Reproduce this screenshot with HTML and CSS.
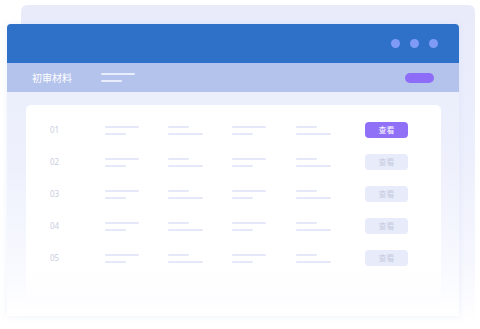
FILE: index.html
```html
<!DOCTYPE html>
<html lang="zh">
<head>
<meta charset="utf-8">
<link rel="stylesheet" href="styles.css">
</head>
<body>
<div class="stage">
  <div class="back-card"></div>
  <div class="window">
    <div class="titlebar">
      <span class="dot"></span><span class="dot"></span><span class="dot"></span>
    </div>
    <div class="navbar">
      <span class="nav-title">初审材料</span>
      <div class="nav-lines"><span class="nl long"></span><span class="nl short"></span></div>
      <span class="nav-pill"></span>
    </div>
    <div class="content">
      <div class="card">
        <div class="row">
          <span class="num">01</span>
          <div class="cell a"><i></i><i></i></div>
          <div class="cell b"><i></i><i></i></div>
          <div class="cell a"><i></i><i></i></div>
          <div class="cell b"><i></i><i></i></div>
          <span class="btn active">查看</span>
        </div>
        <div class="row">
          <span class="num">02</span>
          <div class="cell a"><i></i><i></i></div>
          <div class="cell b"><i></i><i></i></div>
          <div class="cell a"><i></i><i></i></div>
          <div class="cell b"><i></i><i></i></div>
          <span class="btn">查看</span>
        </div>
        <div class="row">
          <span class="num">03</span>
          <div class="cell a"><i></i><i></i></div>
          <div class="cell b"><i></i><i></i></div>
          <div class="cell a"><i></i><i></i></div>
          <div class="cell b"><i></i><i></i></div>
          <span class="btn">查看</span>
        </div>
        <div class="row">
          <span class="num">04</span>
          <div class="cell a"><i></i><i></i></div>
          <div class="cell b"><i></i><i></i></div>
          <div class="cell a"><i></i><i></i></div>
          <div class="cell b"><i></i><i></i></div>
          <span class="btn">查看</span>
        </div>
        <div class="row">
          <span class="num">05</span>
          <div class="cell a"><i></i><i></i></div>
          <div class="cell b"><i></i><i></i></div>
          <div class="cell a"><i></i><i></i></div>
          <div class="cell b"><i></i><i></i></div>
          <span class="btn">查看</span>
        </div>
      </div>
    </div>
  </div>
</div>
</body>
</html>
```

FILE: styles.css
```css
html, body {
  margin: 0;
  padding: 0;
  background: #ffffff;
}
body {
  width: 480px;
  height: 329px;
  overflow: hidden;
  font-family: "Noto Sans CJK SC", "Noto Sans", sans-serif;
}
.stage {
  position: relative;
  width: 480px;
  height: 329px;
  padding: 24px 0 0 7px;
  box-sizing: border-box;
}
.back-card {
  position: absolute;
  left: 21px;
  top: 5px;
  width: 454px;
  height: 318px;
  border-radius: 6px;
  background: linear-gradient(180deg, #e9ebfb 0%, #eceffc 45%, #f6f7fe 80%, rgba(255,255,255,0) 100%);
}
.window {
  position: relative;
  width: 452px;
  height: 292px;
  border-radius: 4px 4px 0 0;
  overflow: hidden;
  display: flex;
  flex-direction: column;
  box-shadow: 0 0 6px rgba(190, 200, 235, 0.25);
  background: linear-gradient(180deg, #e8ecfb 0%, #eef1fc 50%, #f9faff 85%, #ffffff 100%);
}
.titlebar {
  height: 39px;
  background: #2f71c8;
  display: flex;
  align-items: center;
  justify-content: flex-end;
  gap: 10px;
  padding-right: 21px;
  padding-top: 0;
  box-sizing: border-box;
}
.dot {
  width: 9px;
  height: 9px;
  border-radius: 50%;
  background: #7f9bf6;
}
.navbar {
  height: 29px;
  background: #b4c3ec;
  display: flex;
  align-items: center;
  padding: 0 25px 0 25px;
  box-sizing: border-box;
}
.nav-title {
  color: #ffffff;
  font-size: 10px;
  line-height: 12px;
  width: 69px;
  margin-top: 1px;
}
.nav-lines {
  display: flex;
  flex-direction: column;
  gap: 5px;
  flex: 1;
}
.nl {
  height: 2px;
  background: #e9eefc;
  border-radius: 1px;
}
.nl.long { width: 34px; }
.nl.short { width: 21px; }
.nav-pill {
  width: 29px;
  height: 10px;
  border-radius: 5px;
  background: #8d6cf8;
}
.content {
  flex: 1;
  padding: 13px 0 0 19px;
}
.card {
  width: 415px;
  height: 198px;
  border-radius: 5px;
  background: linear-gradient(180deg, #ffffff 0%, #ffffff 80%, #fdfdff 100%);
  padding: 9px 0 0 24px;
  box-sizing: border-box;
}
.row {
  height: 32px;
  display: grid;
  grid-template-columns: 55px 63px 64px 64px 69px 43px;
  align-items: center;
}
.num {
  font-family: "Noto Sans", "Liberation Sans", sans-serif;
  font-size: 8px;
  color: #c9cde0;
  line-height: 10px;
}
.cell {
  display: flex;
  flex-direction: column;
  gap: 5px;
}
.cell i {
  display: block;
  height: 2px;
  background: #e4e8f8;
  border-radius: 1px;
}
.cell.a i:first-child { width: 34px; }
.cell.a i:last-child { width: 21px; }
.cell.b i:first-child { width: 21px; }
.cell.b i:last-child { width: 35px; }
.btn {
  height: 16px;
  border-radius: 4px;
  background: #e7ebfa;
  color: #c6cbe0;
  font-size: 8px;
  line-height: 16px;
  text-align: center;
}
.btn.active {
  background: #9170f8;
  color: #ffffff;
}
```
